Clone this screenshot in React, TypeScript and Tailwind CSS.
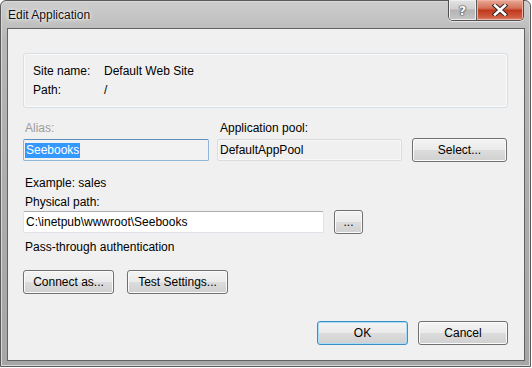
import React from "react";

function Win7Button(props: {
  label: string;
  className?: string;
  isDefault?: boolean;
}) {
  const { label, className, isDefault } = props;
  const border = isDefault ? "border-[#3c8ec9]" : "border-[#707070]";
  const inner = isDefault
    ? "shadow-[inset_0_0_0_1px_#a8dcf7]"
    : "shadow-[inset_0_0_0_1px_#fbfbfb]";

  return (
    <button
      type="button"
      className={`flex h-[24px] items-center justify-center rounded-[3px] border ${border} ${inner} bg-[linear-gradient(to_bottom,#f3f3f3_0%,#ebebeb_48%,#dcdcdc_52%,#d0d0d0_100%)] text-[12px] leading-none text-black ${className ?? ""}`}
    >
      {label}
    </button>
  );
}

function TitleButtons() {
  return (
    <div className="-mt-px mr-[1px] flex h-[21px] overflow-hidden rounded-b-[5px] border border-t-0 border-[#4f4f4f] shadow-[0_1px_0_#e6e6e6]">
      <div className="flex w-[28px] items-center justify-center border-r border-[#5a5a5a] bg-[linear-gradient(to_bottom,#e3e3e3_0%,#cfcfcf_45%,#b4b4b4_50%,#c6c6c6_100%)] shadow-[inset_0_0_0_1px_#eeeeee]">
        <span className="font-['DejaVu_Sans',sans-serif] text-[13px] font-bold leading-none text-white [text-shadow:0_0_1px_#333,0_0_1px_#333,0_0_2px_#444]">
          ?
        </span>
      </div>
      <div className="flex w-[46px] items-center justify-center bg-[linear-gradient(to_bottom,#e9a996_0%,#d4725a_40%,#c1391d_52%,#cf5b40_85%,#e08a6e_100%)] shadow-[inset_0_0_0_1px_#efb3a3]">
        <svg width="16" height="12" viewBox="0 0 16 12">
          <path
            d="M3 1.5 L13 10.5 M13 1.5 L3 10.5"
            stroke="#3b2a26"
            strokeWidth="4.6"
            strokeLinecap="square"
          />
          <path
            d="M3 1.5 L13 10.5 M13 1.5 L3 10.5"
            stroke="#ffffff"
            strokeWidth="2.6"
            strokeLinecap="square"
          />
        </svg>
      </div>
    </div>
  );
}

export default function App() {
  return (
    <div className="h-[368px] w-[532px] bg-white font-['Liberation_Sans',Arial,sans-serif] text-[12px] text-black">
      <div className="flex h-[367px] w-[531px] flex-col rounded-t-[6px] border border-[#5a5a5a] bg-[linear-gradient(to_bottom,#cdcdcd_0px,#c2c2c2_20px,#b6b6b6_40px,#acacac_200px,#a6a6a6_367px)] pb-[5px] pl-[6px] pr-[5px] shadow-[inset_0_0_0_1px_#d8d8d8]">
        <div className="flex h-[27px] items-start justify-between">
          <span className="ml-[1px] pt-[7px] text-[12px] leading-[15px] text-[#101010] [text-shadow:0_0_6px_#ffffff,0_0_3px_#ffffff]">
            Edit Application
          </span>
          <TitleButtons />
        </div>

        <div className="flex-1 border border-[#626262] bg-[#f0f0f0] pl-[15px] pr-[16px] pt-[24px]">
          <div className="h-[55px] w-[485px] rounded-[3px] border border-[#d5dfe5] pl-[9px] pt-[8px] shadow-[inset_0_0_0_1px_#fafafa]">
            <div className="flex leading-[19px]">
              <span className="w-[71px]">Site name:</span>
              <span>Default Web Site</span>
            </div>
            <div className="flex leading-[19px]">
              <span className="w-[71px]">Path:</span>
              <span>/</span>
            </div>
          </div>

          <div className="mt-[12px] flex">
            <div className="w-[186px]">
              <div className="pl-[2px] leading-[16px] text-[#9c9c9c]">Alias:</div>
              <div className="mt-[3px] flex h-[22px] items-center rounded-[2px] border border-[#8fb5d8] border-t-[#5d8fbd] bg-[#f2f2f2] pl-[1px]">
                <span className="bg-[#3399ff] px-[1px] leading-[15px] text-white">
                  Seebooks
                </span>
              </div>
            </div>
            <div className="ml-[8px] w-[185px]">
              <div className="pl-[3px] leading-[16px]">Application pool:</div>
              <div className="mt-[3px] flex h-[22px] items-center rounded-[2px] border border-[#dcdcdc] bg-[#f0f0f0] pl-[2px] shadow-[inset_0_0_0_1px_#f7f7f7]">
                DefaultAppPool
              </div>
            </div>
            <Win7Button
              label="Select..."
              className="-mb-[1px] ml-[10px] w-[95px] self-end"
            />
          </div>

          <div className="mt-[14px] pl-[2px] leading-[16px]">Example: sales</div>

          <div className="mt-[3px] pl-[2px] leading-[16px]">Physical path:</div>
          <div className="flex h-[24px] items-center">
            <div className="flex h-[22px] w-[301px] items-center rounded-[2px] border border-[#e2e3ea] border-t-[#abadb3] bg-white pl-[2px]">
              C:\inetpub\wwwroot\Seebooks
            </div>
            <Win7Button label="..." className="ml-[10px] w-[29px]" />
          </div>

          <div className="mt-[5px] pl-[2px] leading-[16px]">
            Pass-through authentication
          </div>

          <div className="mt-[15px] flex">
            <Win7Button label="Connect as..." className="w-[91px]" />
            <Win7Button label="Test Settings..." className="ml-[13px] w-[101px]" />
          </div>

          <div className="mt-[27px] flex justify-end">
            <Win7Button label="OK" isDefault className="w-[91px]" />
            <Win7Button label="Cancel" className="ml-[10px] w-[90px]" />
          </div>
        </div>
      </div>
    </div>
  );
}
